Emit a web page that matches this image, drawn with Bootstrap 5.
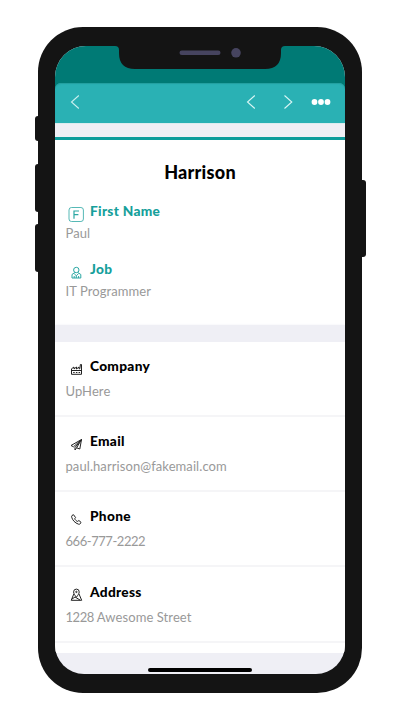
<!DOCTYPE html>
<html lang="en">
<head>
<meta charset="utf-8">
<meta name="viewport" content="width=device-width, initial-scale=1">
<title>Harrison</title>
<link href="https://cdn.jsdelivr.net/npm/bootstrap@5.3.0/dist/css/bootstrap.min.css" rel="stylesheet">
<style>
body{width:400px;height:720px;background:#fff;font-family:Lato,"Open Sans",sans-serif;padding-top:27px}
.phone{width:324px;height:666px;background:#141414;border-radius:45px;padding:19px 17px 19px 17px}
.side-key{left:-3.5px;width:6px;background:#141414;border-radius:3px 0 0 3px}
.key-a{top:89px;height:25px}.key-b{top:137px;height:48px}.key-c{top:197px;height:48px}
.key-r{left:auto;right:-3.5px;top:153px;height:77px;border-radius:0 3px 3px 0}
.screen{width:290px;height:628px;border-radius:31px 31px 29px 29px;background:#efeff5}
.status{height:45px;margin-bottom:-8px;background:#007a75}
.notch{top:0;left:60px}
.topbar{height:39.5px;background:#2ab1b4;border-radius:6px 6px 0 0;padding:0 14px 1px 15px;box-shadow:inset 0 1px 1px #239f9f}
.strip{height:14px;border-top:1px solid #dcecef}
.profile{height:188.5px;border-top:3px solid #0d9c9b;padding:20px 10px 0}
.profile h1{font-size:18px;line-height:24px;font-weight:900;margin:0 0 17.5px;color:#000;letter-spacing:.25px}
.line{height:20px;line-height:20px;font-size:13px;white-space:nowrap}
.label{font-size:13.7px;font-weight:900;color:#000;letter-spacing:.3px}
.teal{color:#16a09b}
.value{color:#999;letter-spacing:.08px;padding-left:.5px}
.digits{letter-spacing:-.45px}
.ico{width:16px;height:16px;margin:5px 6px 0 3px;flex:none}
.divide{height:17px;box-shadow:0 0 2px #efeff5}
.entry{height:75.2px;padding:14px 10px 0}
.entry .value{margin-top:5px}
.entry::after{content:"";display:block;height:2px;margin:14px -10px 0;background:#f5f5f7}
.tail{height:10.5px}
.home{left:93px;bottom:2.5px;width:104px;height:3.5px;background:#000}
.gap-pair{margin-top:1.5px}.gap-job{margin-top:2px}.gap-group{margin-top:16px}
.next{margin-left:27px}.more{margin-left:18px}
</style>
<script src="https://cdn.jsdelivr.net/npm/bootstrap@5.3.0/dist/js/bootstrap.bundle.min.js"></script>
</head>
<body class="m-0 overflow-hidden">
<div class="phone position-relative mx-auto">
  <span class="side-key key-a position-absolute"></span><span class="side-key key-b position-absolute"></span><span class="side-key key-c position-absolute"></span><span class="side-key key-r position-absolute"></span>
  <main class="screen position-relative overflow-hidden d-flex flex-column">
    <div class="status flex-shrink-0">
      <svg class="notch position-absolute" width="170" height="24" viewBox="0 0 170 24"><path d="M0 0Q4 0 4 4V7Q4 23 20 23H150Q166 23 166 7V4Q166 0 170 0Z" fill="#141414"/><rect x="64.500" y="4.500" width="41" height="4.500" rx="2.250" fill="#46445f"/><circle cx="121" cy="6.800" r="4.800" fill="#46445f"/></svg>
    </div>
    <nav class="topbar d-flex align-items-center flex-shrink-0 position-relative">
      <svg class="me-auto" width="10" height="16" viewBox="0 0 10 16" fill="none" stroke="#c8efee" stroke-width="1.100"><path d="M8.800 1.500 1.500 8l7.300 6.500"/></svg>
      <svg width="10" height="16" viewBox="0 0 10 16" fill="none" stroke="#d8f5f4" stroke-width="1.100"><path d="M8.800 1.500 1.500 8l7.300 6.500"/></svg>
      <svg class="next" width="10" height="16" viewBox="0 0 10 16" fill="none" stroke="#d8f5f4" stroke-width="1.100"><path d="m1.500 1.500 7.300 6.500-7.300 6.500"/></svg>
      <svg class="more" width="20" height="8" viewBox="0 0 20 8" fill="#fff"><circle cx="3.500" cy="4" r="2.900"/><circle cx="10" cy="4" r="2.900"/><circle cx="16.500" cy="4" r="2.900"/></svg>
    </nav>
    <div class="strip flex-shrink-0"></div>
    <section class="profile bg-white flex-shrink-0">
      <h1 class="text-center">Harrison</h1>
      <div class="line label teal d-flex"><svg class="ico" viewBox="0 0 16 16" fill="none" stroke="#2ba7a3"><rect x="1" y="1.500" width="14.400" height="14" rx="2.500" stroke-width=".8"/><path d="M6 12.700V5h5M6 8.700h4.400" stroke-width="1.200"/></svg><span>First Name</span></div>
      <div class="line value gap-pair">Paul</div>
      <div class="line label teal d-flex gap-group"><svg class="ico" viewBox="0 0 16 16" fill="none" stroke="#2ba7a3" stroke-width="1"><circle cx="8.300" cy="6" r="2.700"/><path d="M6.800 8.500 4 10.500V14h8.800v-3.500L9.800 8.500M6.200 9.700l2.100 2 2.200-2M8.300 11.700V14M6.200 12v2M10.600 12v2"/></svg><span>Job</span></div>
      <div class="line value gap-job">IT Programmer</div>
    </section>
    <div class="divide flex-shrink-0"></div>
    <section class="bg-white flex-shrink-0">
      <div class="entry"><div class="line label d-flex"><svg class="ico" viewBox="0 0 16 16" fill="none" stroke="#222" stroke-width="1"><path d="M3.500 13.300V7.800L6 6v2l2.500-2v2L11 6v1.800h.8L12.400 3.500h1.100v9.800ZM3.500 9.500h10M5.200 11.500h1.500m1.200 0h1.500m1.200 0h1.500"/></svg><span>Company</span></div><div class="line value">UpHere</div></div>
      <div class="entry"><div class="line label d-flex"><svg class="ico" viewBox="0 0 16 16" fill="none" stroke="#222" stroke-width="1" stroke-linejoin="round"><path d="M13.500 3.500 3 9.500l2.500 1.300 8-7.300-1.700 9.500-3.200-1.200 4.900-8.300-6.500 8L7 14l1.600-2.200"/></svg><span>Email</span></div><div class="line value">paul.harrison@fakemail.com</div></div>
      <div class="entry"><div class="line label d-flex"><svg class="ico" viewBox="0 0 16 16" fill="none" stroke="#222" stroke-width="1" stroke-linejoin="round"><path d="M4 4.500 5.500 3.700 7.600 6.600 6.700 7.800C7.200 9 8.500 10.200 9.600 10.400L10.900 9.500 13 11.300C12.600 13 11.500 13.500 10.500 13.200 7 12 4.300 9 3.700 6.200 3.500 5.400 3.600 4.900 4 4.500Z"/></svg><span>Phone</span></div><div class="line value digits">666-777-2222</div></div>
      <div class="entry"><div class="line label d-flex"><svg class="ico" viewBox="0 0 16 16" fill="none" stroke="#222" stroke-width="1" stroke-linejoin="round"><path d="M8.400 10.300C6.800 8 5.600 6.600 5.600 4.900a2.800 2.800 0 0 1 5.600 0c0 1.700-1.200 3.100-2.800 5.400Z"/><circle cx="8.400" cy="4.900" r=".7"/><path d="M5.800 7 3.200 13.300h10.500L11 7M4 12l3-2 5 3"/></svg><span>Address</span></div><div class="line value"><span class="digits">1228</span> Awesome Street</div></div>
      <div class="tail"></div>
    </section>
    <div class="home position-absolute rounded-pill"></div>
  </main>
</div>
</body>
</html>
